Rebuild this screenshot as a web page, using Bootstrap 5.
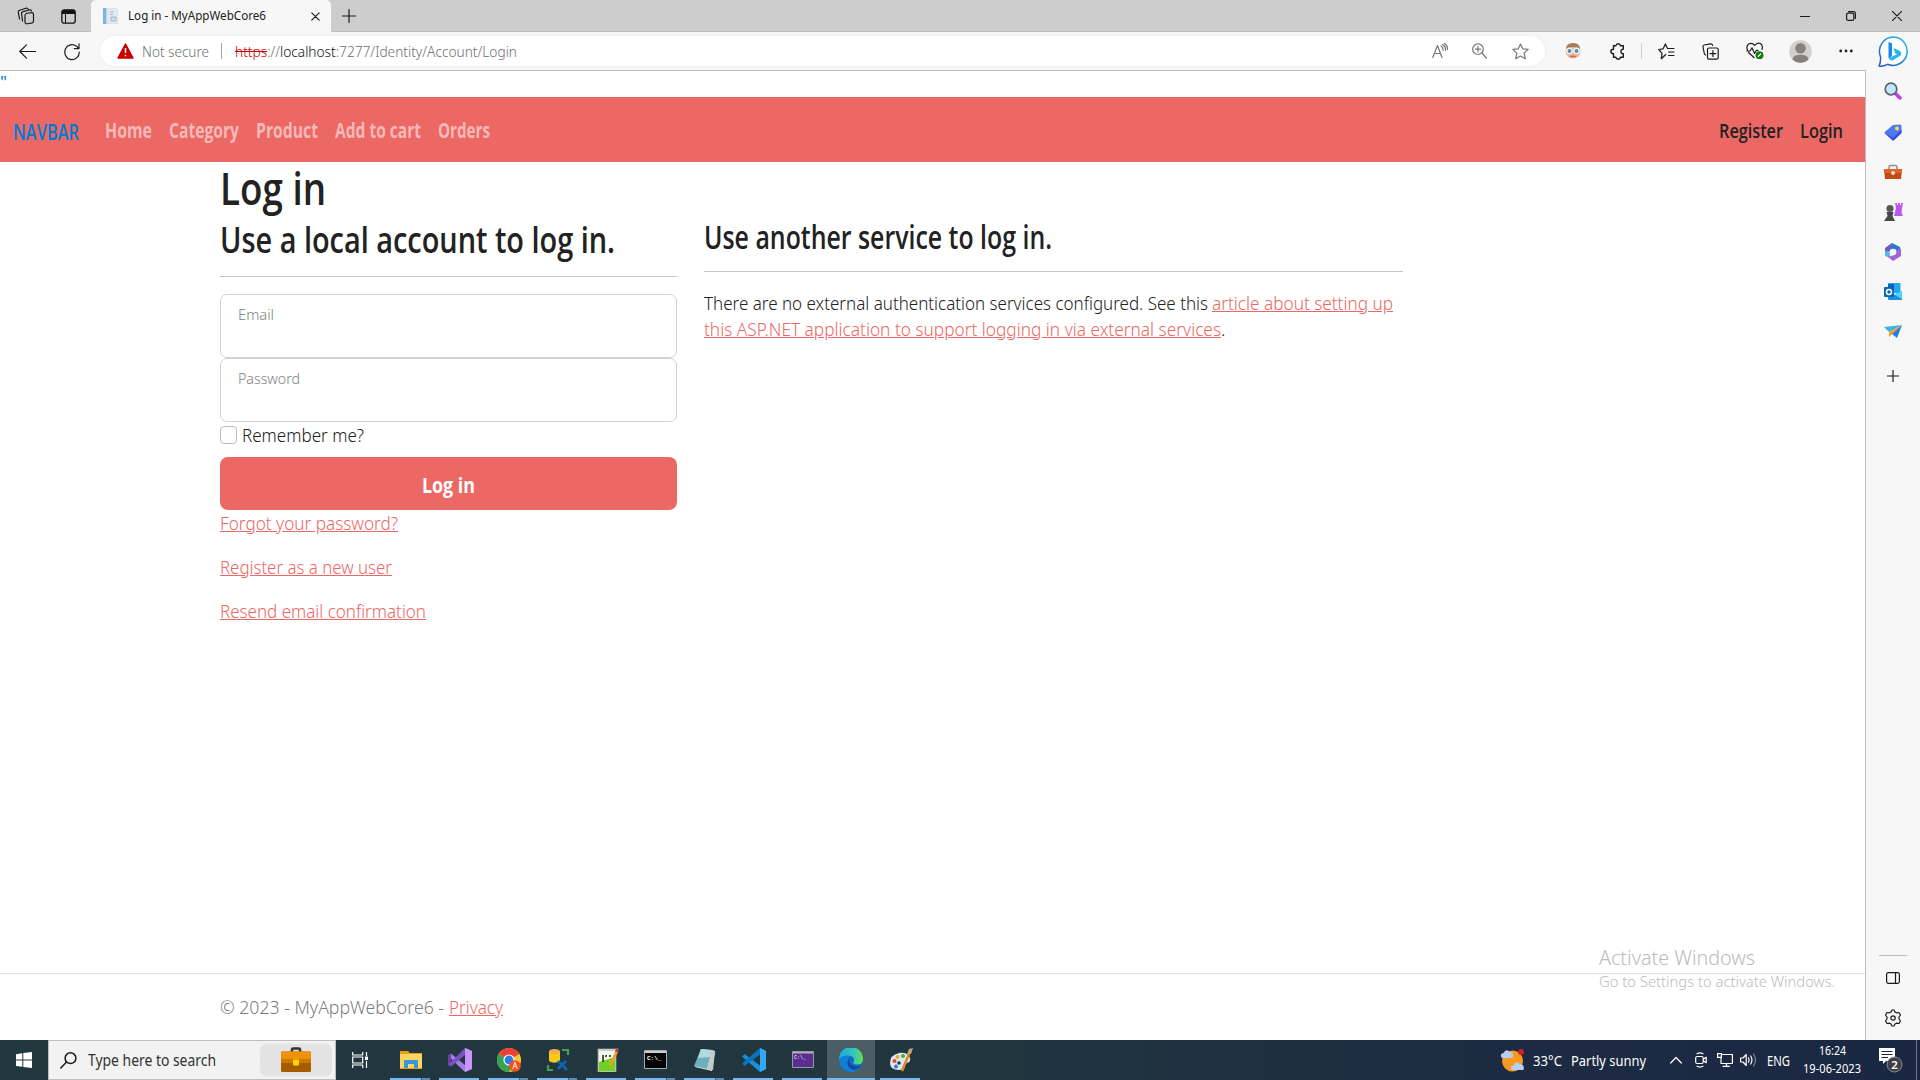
<!DOCTYPE html>
<html lang="en">
<head>
<meta charset="utf-8">
<title>Log in - MyAppWebCore6</title>
<link href="https://cdn.jsdelivr.net/npm/bootstrap@5.3.0/dist/css/bootstrap.min.css" rel="stylesheet">
<style>
body{width:1920px;height:1080px;overflow:hidden;font-family:"Noto Sans","Open Sans",sans-serif;color:#222;background:#fff}
svg{display:block;flex:none}
a{color:#eb6864}
.fit{display:inline-block;white-space:nowrap;transform-origin:0 50%}
.ic{fill:none;stroke:#1b1b1b;stroke-width:1.2;stroke-linecap:round;stroke-linejoin:round}
.tabstrip{height:32px;background:#cdcdcd;box-shadow:inset 0 -1px #bfbfbf}
.tab{width:240px;height:32px;margin-left:15px;background:#f7f7f7;border-radius:5px 5px 0 0;font-size:12px;color:#222}
.toolbar{height:38px;background:#f7f7f7}
.address{width:1445px;height:30px;margin-left:19px;border-radius:15px;background:#fff;font-size:14px;font-weight:350;color:#707070;box-shadow:0 0 3px #e8e8e8}
.vline{width:1px;height:16px;background:#a0a0a0}
.viewport-pane{width:1866px;border-top:1px solid #bdbdbd;border-right:1px solid #bdbdbd}
.rail{width:54px;background:#f7f7f7}
.quote{height:26px;line-height:22px;font-size:17px;color:#007bd4;padding-left:0}
.news{font-family:"Open Sans","Noto Sans",sans-serif}
.sitebar{height:65px;background:#eb6864;font-size:20.5px;padding-top:2px}
.sitebar a{text-decoration:none;font-weight:700;color:#f7b9b7}
.sitebar .brandname{color:#007bd4;font-weight:600;font-size:21px;padding-top:4px}
.sitebar .acct{color:#222;font-weight:600}
.page{margin-left:220px;width:1183px;font-size:18px;line-height:26px;height:811px;font-weight:350}
.page h1{font-size:45px;line-height:51px;margin:0;font-weight:600}
.page h2{font-size:36px;line-height:54px;margin:0;font-weight:600}
.page h3{font-size:32px;line-height:48px;margin:0;font-weight:600}
.rule{height:1px;background:#c4c4c4}
.field{height:64px;border:1px solid #ced4da;border-radius:7px;padding:10px 17px}
.field label{display:block;font-size:14px;line-height:20px;color:#808080}
.field input{display:block;width:100%;height:24px;border:0;outline:0}
.chk{width:17px;height:18px;border:1px solid #bdbdbd;border-radius:4px}
.go{height:53px;margin-top:9px;background:#eb6864;color:#fff;border:0;border-radius:8px;font-size:22px;line-height:30px;font-weight:700;padding:0}
.foot{height:67px;border-top:1px solid #dee2e6;padding-left:220px;font-size:18px;font-weight:350;color:#7c7c7c;line-height:66px}
.watermark{left:1599px;top:944px;color:#bcbcbc;z-index:3;font-weight:350}
.watermark .w1{font-size:19.5px;line-height:28px}
.watermark .w2{font-size:15.4px;line-height:19px}
.taskbar{height:40px;background:linear-gradient(90deg,#22383f 0%,#21363f 50%,#1d2b42 78%,#1a2742 100%);color:#fff;font-size:15px}
.searchbox{width:288px;height:40px;background:#f2f2f2;border:1px solid #bdbdbd;color:#333;font-size:16px}
.hl{width:72px;height:32px;border-radius:7px;background:#e3e3e3}
.app{width:49px;height:40px;padding-top:8px}
.app::after{content:"";position:absolute;left:4px;bottom:0;width:40px;height:2px;background:#76b9ed}
.app.multi::after{background:linear-gradient(90deg,#76b9ed 31px,#3e5a6c 31px,#3e5a6c 32px,#5b8cb4 32px)}
.app.current{width:48px;background:#4d5d64;margin-right:1px}
.app.current::after{left:0;width:48px}
.clock{font-size:12px;line-height:18px;width:60px}
</style>
<script src="https://cdn.jsdelivr.net/npm/bootstrap@5.3.0/dist/js/bootstrap.bundle.min.js"></script>
</head>
<body class="d-flex flex-column">

<header class="tabstrip d-flex align-items-center">
  <svg class="ic" style="margin-left:17px" width="18" height="18" viewBox="0 0 18 18"><rect x="8" y="6" width="8.5" height="10.5" rx="2" transform="skewY(-7) translate(0 1.5)"/><path d="M5.5 14 4.5 6.5Q4.300 5 6 4.600L12.500 3Q14 2.700 14.500 4M2.500 12 1.300 5.300Q1 3.600 2.700 3.200L9 1.200Q10.500 .8 11.300 2.300"/></svg>
  <svg style="margin-left:26px" width="15" height="15" viewBox="0 0 15 15"><rect x=".8" y=".8" width="13.400" height="13.400" rx="2.500" fill="none" stroke="#111" stroke-width="1.300"/><path d="M1 5V3Q1 1 3 1H12Q14 1 14 3V5Z" fill="#111"/><path d="M4.500 5V14" stroke="#111"/></svg>
  <div class="tab d-flex align-items-center">
    <svg style="margin-left:12px" width="15" height="16" viewBox="0 0 15 16"><path d="M0 0H3.500V16H0Z" fill="#7db4de"/><path d="M5 0H12L15 3V16H5Z" fill="#e6ebf0" stroke="#c6d2de" stroke-width=".7"/><path d="M7 4H11M7 6.500H10M8 9H13V13H8Z" stroke="#9bb6d2" fill="#cbdcea"/></svg>
    <span class="fit" data-w="138" style="margin-left:10px">Log in - MyAppWebCore6</span>
    <svg class="ic" style="margin-left:45px" width="9" height="9" viewBox="0 0 9 9"><path d="M.8.8 8.200 8.200M8.200.8.8 8.200"/></svg>
  </div>
  <svg class="ic" style="margin-left:11px" width="14" height="14" viewBox="0 0 14 14"><path d="M7 .5V13.500M.5 7H13.500"/></svg>
  <div class="d-flex align-items-center ms-auto">
    <svg class="ic" width="10" height="10" viewBox="0 0 10 10"><path d="M0 5.500H10"/></svg>
    <svg class="ic" style="margin-left:36px" width="10" height="10" viewBox="0 0 10 10"><rect x=".6" y="2.200" width="7.200" height="7.200" rx="1.500"/><path d="M2.500.6H7.500Q9.400.6 9.400 2.500V7.500"/></svg>
    <svg class="ic" style="margin:0 18px 0 36px" width="10" height="10" viewBox="0 0 10 10"><path d="M.3.3 9.700 9.700M9.700.3.3 9.700"/></svg>
  </div>
</header>

<div class="toolbar d-flex align-items-center">
  <svg class="ic" style="margin-left:19px" width="17" height="15" viewBox="0 0 17 15"><path d="M16.500 7.500H.8M7.500.8.8 7.500 7.500 14.200"/></svg>
  <svg class="ic" style="margin-left:27px;margin-top:1px" width="18" height="18" viewBox="0 0 18 18"><path d="M16.300 9A7.300 7.500 0 1 1 13.500 3.200L15.800 5.500M16 .8V5.600H11.300"/></svg>
  <div class="address d-flex align-items-center">
    <svg style="margin-left:17px" width="17" height="16" viewBox="0 0 17 16"><path d="M8.500 1 16 15H1Z" fill="#c80000" stroke="#c80000" stroke-width="1.500" stroke-linejoin="round"/><path d="M8.500 5V10M8.500 11.800V13.200" stroke="#fff" stroke-width="1.500"/></svg>
    <span class="fit" data-w="67" style="margin-left:8px">Not secure</span>
    <i class="vline" style="margin:0 13px 0 12px"></i>
    <span class="fit" data-w="282"><s style="color:#c80000">https</s>://<span style="color:#111">localhost</span>:7277/Identity/Account/Login</span>
    <div class="d-flex align-items-center ms-auto">
      <svg class="ic" style="stroke:#777" width="16" height="16" viewBox="0 0 16 16"><path d="M.8 14.500 5.500 2.500 10 14.500M2.500 10.500H8.600M9 3Q11.400 4.500 11 7.500M10.500 1.500Q14 3.300 13.600 7.500M12.500.5Q16 2.500 15.500 6.500"/></svg>
      <svg class="ic" style="stroke:#777;margin-left:24px" width="15" height="16" viewBox="0 0 15 16"><circle cx="6" cy="6.200" r="5.300"/><path d="M6 3.600V8.800M3.400 6.200H8.600M10 10 14.400 15"/></svg>
      <svg class="ic" style="stroke:#777;margin:0 16px 0 25px" width="17" height="17" viewBox="0 0 17 17"><path d="M8.500 1 10.700 5.800 16.200 6.400 12.200 10.100 13.300 15.800 8.500 13 3.700 15.800 4.800 10.100.8 6.400 6.300 5.800Z"/></svg>
    </div>
  </div>
  <svg style="margin-left:20px" width="16" height="16" viewBox="0 0 16 16"><circle cx="8" cy="8" r="7.500" fill="#efb18c"/><path d="M1 6Q1 0 8 0T15 6L12 4H4Z" fill="#9e8060"/><circle cx="4.500" cy="8" r="2.600" fill="#4f90a8" stroke="#f0f8f8" stroke-width="1.400"/><circle cx="11.500" cy="8" r="2.600" fill="#4f90a8" stroke="#f0f8f8" stroke-width="1.400"/><path d="M5 13.500H11" stroke="#c4745c" stroke-width="1.500"/></svg>
  <svg class="ic" style="margin-left:29px;stroke-width:1.400" width="16" height="17" viewBox="0 0 16 17"><path d="M3.500 2.800H5.800Q6.200.8 8.200.8T10.500 2.800H13.300V6.300Q10.900 6.200 10.900 8.500T13.300 10.700V14.200H10.500Q10.200 16.200 8.200 16.200T5.800 14.200H3.500V10.700Q.8 10.600.8 8.500T3.500 6.300Z"/></svg>
  <i class="vline" style="margin-left:15px;background:#cfcfcf"></i>
  <svg class="ic" style="margin-left:16px" width="17" height="17" viewBox="0 0 17 17"><path d="M9.500 5.500H16M10.500 9H16M10.500 12.500H16M7.800 11.500 3.300 15.700 4 10.300.8 6.500 5.100 5.800 7.400 1 9.500 5.500"/></svg>
  <svg class="ic" style="margin-left:27px" width="17" height="17" viewBox="0 0 17 17"><path d="M3.500 12Q2.500 11.500 2.200 10L1 4Q.8 2.300 2.300 2L8.500.8Q10.300.6 10.600 2.500M5.500 6.500Q5.500 5 7 5H14.500Q16.200 5 16.200 6.500V14.500Q16.200 16.200 14.500 16.200H7Q5.500 16.200 5.500 14.500ZM10.900 7.700V13.500M8 10.600H13.800"/></svg>
  <svg class="ic" style="margin-left:27px" width="18" height="18" viewBox="0 0 18 18"><path d="M1.500 8Q-.3 3.500 3 1.700Q6.300.3 8.700 3.500Q11 .3 14.300 1.500Q17.300 3 16 7.500M.8 9H4L6 5.800 8.500 11.500 10.500 8.300H12M2.500 10.500 8 15.500"/><circle cx="13.500" cy="13.200" r="3.900" fill="#107c10" stroke="none"/><path d="M12.300 14.300 14.700 12" stroke="#fff"/></svg>
  <svg style="margin-left:25px" width="23" height="23" viewBox="0 0 23 23"><circle cx="11.500" cy="11.500" r="11.300" fill="#d2d0ce"/><circle cx="11.500" cy="8.300" r="5.300" fill="#85817e"/><path d="M3.500 19.400Q4 14.800 11.500 14.800T19.500 19.400Q16 22.700 11.500 22.700T3.500 19.400Z" fill="#85817e"/></svg>
  <svg style="margin-left:27px" width="14" height="4" viewBox="0 0 14 4"><g fill="#222"><circle cx="1.700" cy="2" r="1.400"/><circle cx="7" cy="2" r="1.400"/><circle cx="12.300" cy="2" r="1.400"/></g></svg>
  <svg style="margin-left:25px" width="31" height="31" viewBox="0 0 31 31"><defs><linearGradient id="bg1" x1="1" y1="0" x2="0" y2="1"><stop offset="0" stop-color="#2ac2ec"/><stop offset="1" stop-color="#2455c4"/></linearGradient></defs><path d="M15.500 1A14.200 14.200 0 1 1 9.500 28.300Q5 30.800 1.200 30Q3 26 2.500 20.500A14.200 14.200 0 0 1 15.500 1Z" fill="#fff" stroke="url(#bg1)" stroke-width="1.500"/><path d="M10.500 6 14 7.300V20L11 22.500Q10 21.500 10.500 20Z" fill="#168cf0"/><path d="M15.500 12 22 15Q24 17 22.500 19.500L14.500 24.500Q11.500 24.500 11 22L19 18.200 17 17Z" fill="#23b9ee"/></svg>
</div>

<div class="d-flex flex-grow-1">
  <main class="viewport-pane">
    <div class="quote">"</div>
    <nav class="sitebar news d-flex align-items-center">
      <a class="brandname fit" data-w="66" style="margin-left:13px">NAVBAR</a>
      <a class="fit" data-w="47" style="margin-left:26px">Home</a>
      <a class="fit" data-w="70" style="margin-left:17px">Category</a>
      <a class="fit" data-w="62" style="margin-left:17px">Product</a>
      <a class="fit" data-w="86" style="margin-left:17px">Add to cart</a>
      <a class="fit" data-w="52" style="margin-left:17px">Orders</a>
      <div class="d-flex ms-auto">
        <a class="acct fit" data-w="64">Register</a>
        <a class="acct fit" data-w="43" style="margin:0 22px 0 17px">Login</a>
      </div>
    </nav>
    <div class="page">
      <h1 class="news"><span class="fit" data-w="106">Log in</span></h1>
      <div class="d-flex">
        <section style="width:457px;margin-right:27px">
          <h2 class="news"><span class="fit" data-w="395">Use a local account to log in.</span></h2>
          <div class="rule" style="margin:9px 0 17px"></div>
          <div class="field"><label><span class="fit" data-w="36">Email</span></label><input type="text" aria-label="Email"></div>
          <div class="field"><label><span class="fit" data-w="62">Password</span></label><input type="password" aria-label="Password"></div>
          <div class="d-flex align-items-center"><i class="chk"></i><span class="fit" data-w="122" style="margin-left:5px">Remember me?</span></div>
          <button class="go btn news d-flex w-100 align-items-center justify-content-center"><span class="fit" data-w="53">Log in</span></button>
          <p style="margin-bottom:18px"><a class="fit" data-w="178" href="#">Forgot your password?</a></p>
          <p style="margin-bottom:18px"><a class="fit" data-w="172" href="#">Register as a new user</a></p>
          <p><a class="fit" data-w="206" href="#">Resend email confirmation</a></p>
        </section>
        <section class="flex-grow-1">
          <h3 class="news"><span class="fit" data-w="348">Use another service to log in.</span></h3>
          <div class="rule" style="margin:10px 0 18px"></div>
          <div class="d-flex"><span class="fit" data-w="504" style="margin-right:4px">There are no external authentication services configured. See this</span><a class="fit" data-w="181" href="#">article about setting up</a></div>
          <div class="d-flex"><a class="fit" data-w="517" href="#">this ASP.NET application to support logging in via external services</a>.</div>
        </section>
      </div>
    </div>
    <footer class="foot d-flex"><span class="fit" data-w="224" style="margin-right:5px">© 2023 - MyAppWebCore6 -</span><a class="fit" data-w="54" href="#">Privacy</a></footer>
  </main>
  <aside class="rail d-flex flex-column align-items-center">
    <svg style="margin-top:12px" width="18" height="18" viewBox="0 0 18 18"><path d="M11 11 16 16" stroke="#c03cf0" stroke-width="3.500" stroke-linecap="round"/><circle cx="7" cy="7" r="5.800" fill="#bfe6fa" stroke="#606468" stroke-width="1.700"/></svg>
    <svg style="margin-top:24px" width="18" height="17" viewBox="0 0 18 17"><path d="M9 1 16 .5Q17.500.7 17.500 2V9L10 16Q9 17 8 16L1 9.700Q0 8.700 1 7.700Z" fill="#4a7bf5"/><path d="M1 9 8.500 16Q9 16.500 10 16L17.500 9V6L9 14Z" fill="#4048dc"/><circle cx="13" cy="4.500" r="2" fill="#ffda32"/></svg>
    <svg style="margin-top:23px" width="18" height="16" viewBox="0 0 18 16"><path d="M5 5V3Q5 1.500 6.500 1.500H11.500Q13 1.500 13 3V5" fill="none" stroke="#8a8f94" stroke-width="1.500"/><path d="M0 5H18L17 15H1Z" fill="#c44a14"/><path d="M0 5H18V9H0Z" fill="#e26424"/><circle cx="9" cy="9" r="2" fill="#ddd"/></svg>
    <svg style="margin-top:23px" width="19" height="18" viewBox="0 0 19 18"><path d="M11 0H13V2H14V0H16V2H17V0H19L18 5 17.500 10 19 13H10L12 5Z" fill="#bd55f2"/><circle cx="6" cy="5.500" r="3.600" fill="#56595c"/><path d="M2.500 9H9.500L8.500 13 11 18H0L3.500 13Z" fill="#46484b"/></svg>
    <svg style="margin-top:22px" width="18" height="18" viewBox="0 0 18 18"><path d="M1 5 8 0 9 6 5 9 5.500 14 1 13Z" fill="#7756c8"/><path d="M8 0 16 4 17 9 9 6 5 8Z" fill="#2f76ce"/><path d="M17 6V13L9 18 4 14 10 12 12 7Z" fill="#9b66d8"/><path d="M1 8 5.500 8.500 6 13 1 13Z" fill="#5ab6ea"/><circle cx="9" cy="9" r="3.300" fill="#f7f7f7"/></svg>
    <svg style="margin-top:22px" width="18" height="17" viewBox="0 0 18 17"><path d="M4 1Q4 0 5 0H15.500Q16.500 0 16.500 1V10H4Z" fill="#28a8ea"/><path d="M4 1H10V7H4Z" fill="#0364b8"/><path d="M4 9 11 12 18 8V16Q18 17 17 17H5Q4 17 4 16Z" fill="#1b90df"/><path d="M10 11.500 18 8V16Z" fill="#50d0ff"/><rect y="4" width="10" height="10" rx="1" fill="#0a64b8"/><circle cx="5" cy="9" r="2.500" fill="none" stroke="#fff" stroke-width="1.500"/></svg>
    <svg style="margin-top:25px" width="18" height="14" viewBox="0 0 18 14"><path d="M0 2 18 0 5 7Z" fill="#40b0e8"/><path d="M5 7 18 0 5 12Z" fill="#f0a020"/><path d="M8 9 18 0 13 13Z" fill="#1f7fe2"/></svg>
    <svg class="ic" style="margin-top:31px" width="12" height="12" viewBox="0 0 12 12"><path d="M6 0V12M0 6H12"/></svg>
    <div class="mt-auto" style="width:28px;height:1px;background:#bdbdbd"></div>
    <svg class="ic" style="margin-top:16px" width="14" height="12" viewBox="0 0 14 12"><rect x=".6" y=".6" width="12.800" height="10.800" rx="1.800"/><path d="M9.500.6V11.400"/></svg>
    <svg class="ic" style="margin:25px 0 13px" width="18" height="18" viewBox="0 0 18 18"><path d="M7 3 8 1H10L11 3 12.500 3.800 15 3.500 16.500 6 15 8V10L16.500 12 15 14.500 12.500 14.200 11 15 10 17H8L7 15 5.500 14.200 3 14.500 1.500 12 3 10V8L1.500 6 3 3.500 5.500 3.800Z"/><circle cx="9" cy="9" r="2.200"/></svg>
  </aside>
</div>

<div class="watermark position-absolute">
  <div class="w1"><span class="fit" data-w="156">Activate Windows</span></div>
  <div class="w2"><span class="fit" data-w="236">Go to Settings to activate Windows.</span></div>
</div>

<footer class="taskbar d-flex align-items-center">
  <svg style="margin:0 16px" width="16" height="16" viewBox="0 0 16 16"><path d="M0 2.200 6.300 1.300V7.500H0ZM7.300 1.100 16 0V7.500H7.300ZM0 8.500H6.300V14.800L0 13.900ZM7.300 8.500H16V16L7.300 14.900Z" fill="#fff"/></svg>
  <div class="searchbox d-flex align-items-center">
    <svg class="ic" style="margin-left:11px;stroke-width:1.500" width="17" height="17" viewBox="0 0 17 17"><circle cx="10.500" cy="6.200" r="5.400"/><path d="M6.500 10 .8 16"/></svg>
    <span class="fit" data-w="128" style="margin-left:11px">Type here to search</span>
    <div class="hl d-flex align-items-center justify-content-center ms-auto" style="margin-right:3px"><svg width="30" height="26" viewBox="0 0 30 26"><path d="M11 5V2.500Q11 1.500 12 1.500H18Q19 1.500 19 2.500V5" fill="none" stroke="#333" stroke-width="2.500"/><rect y="4.500" width="30" height="20.500" rx="1.500" fill="#a85c00"/><path d="M0 6Q0 4.500 1.500 4.500H28.500Q30 4.500 30 6V15H0Z" fill="#f09208"/><path d="M0 12H30V16H0Z" fill="#cf7704"/><rect x="12" y="12.500" width="6" height="6" rx="1" fill="#ffd800"/></svg></div>
  </div>
  <svg style="margin:0 17px 0 16px" width="17" height="16" viewBox="0 0 17 16"><path d="M.7 0V3H10.700V0M.7 16V13H10.700V16M.7 5H10.700V11H.7ZM14.500 0V4M14.500 9V16" fill="none" stroke="#fff" stroke-width="1.200"/><path d="M13 4.500H16V8H13Z" fill="#fff"/></svg>

  <div class="app multi position-relative d-flex justify-content-center"><svg style="margin-top:2px" width="22" height="20" viewBox="0 0 22 20"><path d="M0 1H8L10 3H22V19H0Z" fill="#e8a013"/><path d="M0 4H22V18H0Z" fill="#fcd462"/><path d="M4 18V11Q4 10 5 10H17Q18 10 18 11V18H14V14H8V18Z" fill="#3a94da"/></svg></div>
  <div class="app position-relative d-flex justify-content-center"><svg width="24" height="24" viewBox="0 0 24 24"><path d="M17 0 24 3V21L17 24 0 8 3 5.500 17 17Z" fill="#a77be6"/><path d="M0 7 3 5.500V18.500L0 17Z" fill="#6a3fa8"/><path d="M17 0V7L3 18.500 0 17Z" fill="#7d4fc4"/><path d="M17 0 24 3V21L17 24Z" fill="#c995f8"/></svg></div>
  <div class="app multi position-relative d-flex justify-content-center"><svg width="24" height="24" viewBox="0 0 24 24"><circle cx="12" cy="12" r="12" fill="#fcc934"/><path d="M12 12 1.600 6A12 12 0 0 1 22.400 6Z" fill="#ea4335"/><path d="M12 12 1.600 6A12 12 0 0 0 12 24L17 15Z" fill="#34a353"/><circle cx="12" cy="12" r="5.600" fill="#fff"/><circle cx="12" cy="12" r="4.400" fill="#2a7be8"/><circle cx="18" cy="18" r="5.800" fill="#f4511e"/><text x="18" y="20.800" fill="#fff" font-size="8" text-anchor="middle">A</text></svg></div>
  <div class="app multi position-relative d-flex justify-content-center"><svg width="24" height="24" viewBox="0 0 24 24"><path d="M16 2H22V7M2 17V22H7" fill="none" stroke="#47a04b" stroke-width="2.200"/><path d="M3 3V13Q8 16.500 14 13V3Z" fill="#f6ca16"/><ellipse cx="8.500" cy="3.500" rx="5.500" ry="2.500" fill="#f8a94c"/><path d="M12 21 20 13M12 13 21 22" stroke="#0d65b4" stroke-width="2.600"/></svg></div>
  <div class="app position-relative d-flex justify-content-center"><svg width="24" height="24" viewBox="0 0 24 24"><path d="M3 1H21V24H3Z" fill="#f4f8ee" stroke="#7e8e78"/><path d="M4 14 20 9V23H4Z" fill="#72cf28"/><path d="M3 1H21V3H3Z" fill="#ccc"/><path d="M8 7V14M10 8H12M14 8H16" stroke="#222" stroke-width="1.500"/><path d="M15 18 22 3" stroke="#f0a024" stroke-width="2.700"/><path d="M22 0V4" stroke="#b44840" stroke-width="3"/></svg></div>
  <div class="app multi position-relative d-flex justify-content-center"><svg style="margin-top:2px" width="23" height="20" viewBox="0 0 23 20"><path d="M.5.5H22.500V18.500H.5Z" fill="#050505" stroke="#aaa"/><path d="M1 1H22V3H1Z" fill="#c8d0d2"/><text x="3" y="9.500" fill="#fff" font-size="6" font-family="Liberation Mono" font-weight="bold">C:\_</text></svg></div>
  <div class="app multi position-relative d-flex justify-content-center"><svg width="24" height="24" viewBox="0 0 24 24"><path d="M8 1 22 3 19 23 2 19Z" fill="#e8efef"/><path d="M8 1 19 2 14 21 1 18Z" fill="#6eafb9"/><path d="M8 1 19 2 17 9 5 10Z" fill="#b0dadd"/><path d="M22 3 20 22 14 22 19 2Z" fill="#c1cbca"/></svg></div>
  <div class="app position-relative d-flex justify-content-center"><svg width="24" height="24" viewBox="0 0 24 24"><path d="M18 0 24 3V21L18 24 0 8.500 2.500 6 18 17.500Z" fill="#168fdc"/><path d="M18 0V6.500L2.500 18 0 15.500Z" fill="#0872bd"/><path d="M18 0 24 3V21L18 24Z" fill="#32a9f2"/></svg></div>
  <div class="app position-relative d-flex justify-content-center"><svg style="margin-top:3px" width="22" height="18" viewBox="0 0 22 18"><path d="M.5.5H21.500V16.500H.5Z" fill="#5c2d91" stroke="#999"/><path d="M1 1H21V2.500H1Z" fill="#b0b0b8"/><text x="2" y="8" fill="#fff" font-size="5" font-family="Liberation Mono">C:\_</text></svg></div>
  <div class="app current position-relative d-flex justify-content-center"><svg width="24" height="24" viewBox="0 0 24 24"><defs><linearGradient id="ed"><stop offset="0" stop-color="#22a6e0"/><stop offset=".6" stop-color="#33c6c0"/><stop offset="1" stop-color="#64e04c"/></linearGradient></defs><circle cx="12" cy="12" r="12" fill="#1368c2"/><path d="M0 11A12 12 0 0 1 24 11Q24 16.500 18.500 16.500Q13.500 16.500 14.500 13.500Q16 11.500 14 9Q8 5 0 11Z" fill="url(#ed)"/><path d="M12 8.500Q8 10.500 8.500 15Q10 21 17 21Q20 21 22 18.500Q18 24 12 24Q1 23 0 12Q3 6 12 8.500Z" fill="#1080d6"/><path d="M11 9.500Q9 13 12 16.500Q16 20 22 17.500Q19 22 14.500 22Q8 20 8.500 14Q9 11 11 9.500Z" fill="#134b9c"/></svg></div>
  <div class="app position-relative d-flex justify-content-center"><svg width="24" height="24" viewBox="0 0 24 24"><path d="M1 15Q1 7 10 5Q19 4 21 10Q22 14 18 15Q14 16 16 19Q15 22 10 22Q1 22 1 15Z" fill="#dbe8f0"/><circle cx="5.500" cy="13" r="2" fill="#e04840"/><circle cx="8.500" cy="9" r="2" fill="#f2a826"/><circle cx="14" cy="8" r="2" fill="#4bae3a"/><circle cx="10" cy="15" r="1.800" fill="#22383f"/><circle cx="7" cy="18.500" r="2" fill="#3c74dc"/><path d="M13 23 20 6" stroke="#e08a24" stroke-width="2.600"/><path d="M18 6 20 1 24 0 22 6Z" fill="#c8a67a"/></svg></div>

  <div class="d-flex align-items-center ms-auto" style="height:40px">
    <svg width="25" height="23" viewBox="0 0 25 23"><circle cx="12.500" cy="12" r="10.500" fill="#f69a20"/><circle cx="21" cy="3" r="3" fill="#d42020"/><path d="M2 9Q-1 5 3.500 4Q6-1 10 3Q14 3.500 13 8Q12 9.500 2 9ZM12 21Q9 17 13.500 16.500Q16 11 20 15Q25 16 23.500 21Z" fill="#b7cdf4"/></svg>
    <span class="fit" data-w="29" style="margin-left:8px">33°C</span>
    <span class="fit" data-w="75" style="margin-left:9px">Partly sunny</span>
    <svg class="ic" style="stroke:#fff;margin-left:24px" width="12" height="8" viewBox="0 0 12 8"><path d="M.7 7 6 1.500 11.300 7"/></svg>
    <svg class="ic" style="stroke:#fff;margin-left:13px" width="12" height="16" viewBox="0 0 12 16"><rect x=".7" y="4.500" width="7.500" height="7" rx="1.500"/><path d="M8.500 7 11.200 5.300V10.700L8.500 9M2 1.700Q5 .2 8 1.700M2 14.300Q5 15.800 8 14.300"/></svg>
    <svg class="ic" style="stroke:#fff;margin-left:10px;stroke-linejoin:miter" width="16" height="14" viewBox="0 0 16 14"><path d="M5 1.500H15.400V10.500H4V5M9.500 10.500V13M6 13.300H12.500M.6.6H4.400V4.400H.6Z"/></svg>
    <svg class="ic" style="stroke:#fff;margin-left:7px" width="17" height="14" viewBox="0 0 17 14"><path d="M.6 5H3L6.200 1.500V12.500L3 9H.6ZM8.500 4.800Q9.700 7 8.500 9.200M10.700 3Q13.200 7 10.700 11"/><path d="M13.500 1Q17.500 7 13.500 13" stroke="#7e8797"/></svg>
    <span class="fit" data-w="23" style="margin-left:10px;font-size:14px">ENG</span>
    <div class="clock d-flex flex-column align-items-center" style="margin-left:12px"><div><span class="fit" data-w="27">16:24</span></div><div><span class="fit" data-w="58">19-06-2023</span></div></div>
    <svg style="margin-left:17px" width="25" height="26" viewBox="0 0 25 26"><path d="M0 1H16V14H7L4 17V14H0Z" fill="#fff"/><path d="M2.500 4.500H13.500M2.500 7.500H13.500M2.500 10.500H9" stroke="#1a2742" stroke-width="1.200"/><circle cx="15.500" cy="17.500" r="7.500" fill="#3b3f48" stroke="#8b8f96"/><text x="15.500" y="21.700" font-size="11.500" font-weight="600" fill="#fff" text-anchor="middle">2</text></svg>
    <i style="width:1px;height:40px;background:#6c7686;margin:0 3px 0 12px"></i>
  </div>
</footer>

<script>
/* Condense each label to its data-w width, in pixels, and keep the flow in step. */
document.querySelectorAll('.fit').forEach(function(el){
  var natural = el.getBoundingClientRect().width, w = +el.dataset.w;
  el.style.transform = 'scaleX(' + w / natural + ')';
  el.style.marginRight = (parseFloat(getComputedStyle(el).marginRight) + w - natural) + 'px';
});
</script>
</body>
</html>
